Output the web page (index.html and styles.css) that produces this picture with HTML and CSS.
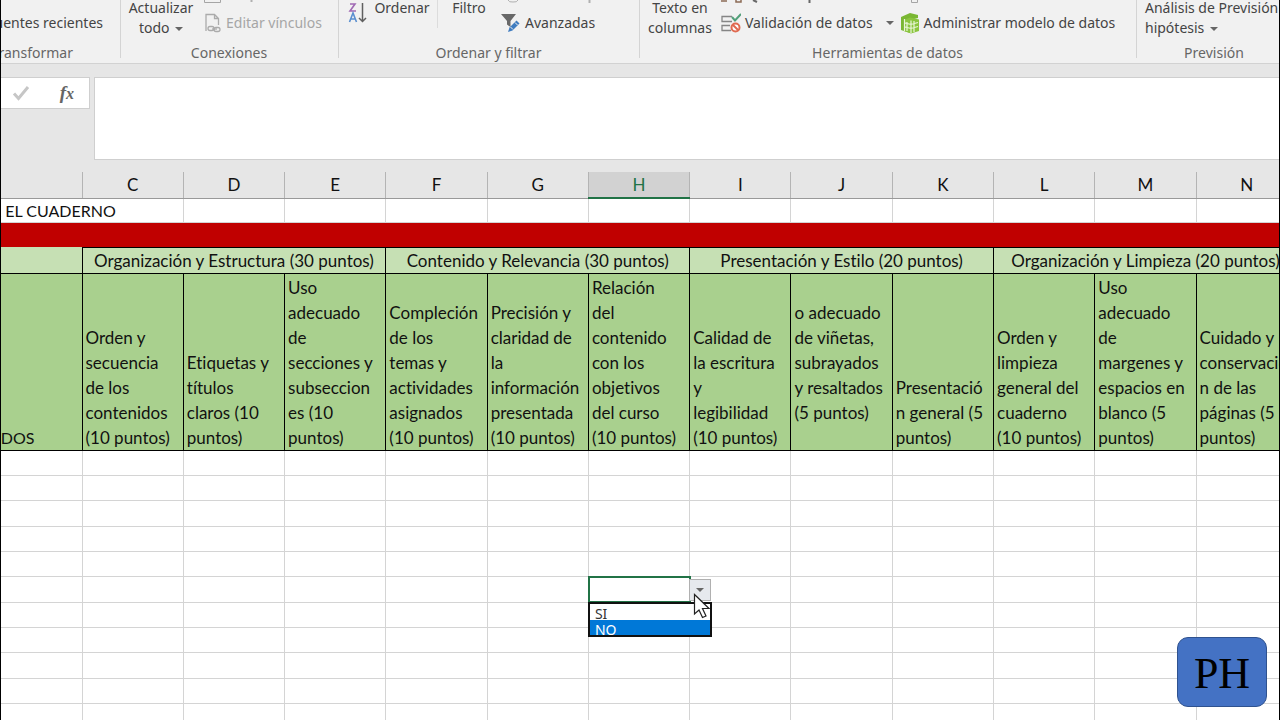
FILE: index.html
```html
<!DOCTYPE html>
<html lang="es">
<head>
<meta charset="utf-8">
<title>Rúbrica del cuaderno</title>
<link rel="stylesheet" href="styles.css">
</head>
<body>
<div class="app">
  <header class="ribbon">
    <section class="group group-transform">
      <div class="tools"><button class="tool">Fuentes recientes</button></div>
      <h2 class="group-name">Obtener y transformar</h2>
    </section>
    <section class="group group-connections">
      <div class="tools">
        <button class="tool-large">Actualizar<br>todo <span class="caret"></span></button>
        <div class="stack">
          <svg class="stub" width="60" height="3" viewBox="0 0 60 3"><path d="M.5 0v2.500h16V0" fill="none" stroke="#a5a5a5"/><path d="M47.500 0v2" stroke="#b0b0b0" stroke-width="2"/></svg>
          <button class="tool" disabled>
            <svg width="18" height="20" viewBox="0 0 18 20" fill="none" stroke="#ababab" stroke-width="1.300"><path d="M2 18V1.500h8.500l4 4V12M10.500 1.500v4h4"/><rect x="4" y="13.500" width="6" height="4" rx="2"/><rect x="10" y="14.500" width="6" height="4" rx="2"/><path d="M8 16h5"/></svg>
            Editar vínculos</button>
        </div>
      </div>
      <h2 class="group-name">Conexiones</h2>
    </section>
    <section class="group group-sort">
      <div class="tools">
        <button class="sort-icon" aria-label="Ordenar de Z a A">
          <svg width="19" height="24" viewBox="0 0 19 24" fill="none"><path d="M2 4h5L2 11h6" stroke="#a06ab4" stroke-width="1.600"/><path d="m1.500 22 3.500-9 3.500 9M3 19h4" stroke="#5a8fd0" stroke-width="1.600"/><path d="M14.500 3v18M11 18l3.500 3.500L18 18" stroke="#606060" stroke-width="1.500"/></svg>
        </button>
        <button class="tool-large tool-sort">Ordenar<br>&nbsp;</button>
        <span class="divider"></span>
        <button class="tool-large tool-filter">Filtro<br>&nbsp;</button>
        <div class="stack">
          <svg class="stub" width="94" height="3" viewBox="0 0 94 3"><path d="M7 0q1 2.500 5 2 4 .5 5-2" fill="none" stroke="#b0b0b0"/><path d="M88.500 0v3" stroke="#b0b0b0" stroke-width="2"/></svg>
          <button class="tool">
            <svg width="20" height="20" viewBox="0 0 20 20"><path d="M0 1h15L9.500 8v6L6 11.500V8z" fill="#686868"/><path d="m7 19 1.500-4.500 7-7 3 3-7 7z" fill="#3f7cc0"/><path d="m9.500 14 2.500 2.500M14 9.500l2.500 2.500" stroke="#f1f1f1"/></svg>
            Avanzadas</button>
        </div>
      </div>
      <h2 class="group-name">Ordenar y filtrar</h2>
    </section>
    <section class="group group-data">
      <div class="tools">
        <button class="tool-large">Texto en<br>columnas</button>
        <div class="stack">
          <svg class="stub" width="100" height="3" viewBox="0 0 100 3"><path d="M0 1h6M15 0v2h5V0" stroke="#8c6b55" stroke-width="1.500" fill="none"/><path d="M32 0l4 2M88.500 0v3" stroke="#686868" stroke-width="2"/></svg>
          <button class="tool">
            <svg width="20" height="20" viewBox="0 0 20 20" fill="none"><path d="M11 3.500H1v5h10M9 12.500H1v5h9" stroke="#858585" stroke-width="1.300"/><path d="m11 4 3 3.500L20 1" stroke="#52a07a" stroke-width="2"/><circle cx="14.500" cy="14.500" r="4" fill="#fff" stroke="#e06a50" stroke-width="2"/><path d="m12 12 5 5" stroke="#e06a50" stroke-width="2"/></svg>
            Validación de datos <span class="caret caret-wide"></span></button>
        </div>
        <div class="stack stack-model">
          <svg class="stub" width="40" height="3" viewBox="0 0 40 3"><path d="M11.500 0v2.500h6V0" fill="none" stroke="#a5a5a5"/></svg>
          <button class="tool">
            <svg width="20" height="21" viewBox="0 0 20 21"><path d="M1 4 10 0l8 2v3l-8 2v13L1 17z" fill="#7ab733"/><path d="m4 7 6-2.500 9 2V18l-8 2.500-7-2.500z" fill="#8bc53f"/><path d="M4.500 6v12M11 7.500V20M7 9v9M14 8v11M5 10l6 1.500 7-2M5 14l6 1.500 7-2" stroke="#e8f5d6" stroke-width="1.200" fill="none"/></svg>
            Administrar modelo de datos</button>
        </div>
      </div>
      <h2 class="group-name">Herramientas de datos</h2>
    </section>
    <section class="group group-forecast">
      <div class="tools">
        <button class="tool-large tool-left">Análisis de<br>hipótesis <span class="caret"></span></button>
        <button class="tool-large tool-left">Previsión<br>&nbsp;</button>
      </div>
      <h2 class="group-name">Previsión</h2>
    </section>
  </header>

  <div class="formula-bar">
    <div class="formula-tools">
      <button disabled aria-label="Introducir"><svg width="18" height="16" viewBox="0 0 18 16"><path d="m2 8.500 4.500 5L16 2" fill="none" stroke="#c6c6c6" stroke-width="3"/></svg></button>
      <button class="fx" aria-label="Insertar función">f<small>x</small></button>
    </div>
    <textarea class="formula" aria-label="Barra de fórmulas"></textarea>
  </div>

  <main class="sheet">
    <table class="grid">
      <colgroup><col class="col-first"><col span="12"></colgroup>
      <thead>
        <tr class="letters"><th></th><th>C</th><th>D</th><th>E</th><th>F</th><th>G</th><th class="active">H</th><th>I</th><th>J</th><th>K</th><th>L</th><th>M</th><th>N</th></tr>
      </thead>
      <tbody class="rubric">
        <tr class="title"><td colspan="2"><span class="from-right">RÚBRICA PARA EVALUAR EL CUADERNO</span></td><td></td><td></td><td></td><td></td><td></td><td></td><td></td><td></td><td></td><td></td><td></td></tr>
        <tr class="band"><td colspan="13"></td></tr>
        <tr class="sections"><td></td><th colspan="3">Organización y Estructura (30 puntos)</th><th colspan="3">Contenido y Relevancia (30 puntos)</th><th colspan="3">Presentación y Estilo (20 puntos)</th><th colspan="3">Organización y Limpieza (20 puntos)</th></tr>
        <tr class="criteria">
          <td><span class="from-right names">APELLIDOS</span></td>
          <td>Orden y<br>secuencia<br>de los<br>contenidos<br>(10 puntos)</td>
          <td>Etiquetas y<br>títulos<br>claros (10<br>puntos)</td>
          <td>Uso<br>adecuado<br>de<br>secciones y<br>subseccion<br>es (10<br>puntos)</td>
          <td>Compleción<br>de los<br>temas y<br>actividades<br>asignados<br>(10 puntos)</td>
          <td>Precisión y<br>claridad de<br>la<br>información<br>presentada<br>(10 puntos)</td>
          <td>Relación<br>del<br>contenido<br>con los<br>objetivos<br>del curso<br>(10 puntos)</td>
          <td>Calidad de<br>la escritura<br>y<br>legibilidad<br>(10 puntos)</td>
          <td>o adecuado<br>de viñetas,<br>subrayados<br>y resaltados<br>(5 puntos)<br>&nbsp;</td>
          <td>Presentació<br>n general (5<br>puntos)</td>
          <td>Orden y<br>limpieza<br>general del<br>cuaderno<br>(10 puntos)</td>
          <td>Uso<br>adecuado<br>de<br>margenes y<br>espacios en<br>blanco (5<br>puntos)</td>
          <td>Cuidado y<br>conservació<br>n de las<br>páginas (5<br>puntos)</td>
        </tr>
      </tbody>
      <tbody class="blank">
        <tr><td></td><td></td><td></td><td></td><td></td><td></td><td></td><td></td><td></td><td></td><td></td><td></td><td></td></tr>
        <tr><td></td><td></td><td></td><td></td><td></td><td></td><td></td><td></td><td></td><td></td><td></td><td></td><td></td></tr>
        <tr><td></td><td></td><td></td><td></td><td></td><td></td><td></td><td></td><td></td><td></td><td></td><td></td><td></td></tr>
        <tr><td></td><td></td><td></td><td></td><td></td><td></td><td></td><td></td><td></td><td></td><td></td><td></td><td></td></tr>
        <tr><td></td><td></td><td></td><td></td><td></td><td></td><td></td><td></td><td></td><td></td><td></td><td></td><td></td></tr>
        <tr><td></td><td></td><td></td><td></td><td></td><td></td>
          <td class="selected">
            <span class="outline"></span>
            <button class="open-list" aria-label="Abrir lista"><span class="caret"></span></button>
            <select class="choices" size="2" aria-label="Valor de la celda"><option>SI</option><option selected>NO</option></select>
            <svg class="pointer" width="18" height="26" viewBox="0 0 18 26"><path d="M1.500 1.500v19.500l4.500-4 3.500 7.500 3.500-1.500-3.500-7.500H16z" fill="#fff" stroke="#222" stroke-width="1.200"/></svg>
          </td>
          <td></td><td></td><td></td><td></td><td></td><td></td></tr>
        <tr><td></td><td></td><td></td><td></td><td></td><td></td><td></td><td></td><td></td><td></td><td></td><td></td><td></td></tr>
        <tr><td></td><td></td><td></td><td></td><td></td><td></td><td></td><td></td><td></td><td></td><td></td><td></td><td></td></tr>
        <tr><td></td><td></td><td></td><td></td><td></td><td></td><td></td><td></td><td></td><td></td><td></td><td></td><td></td></tr>
        <tr><td></td><td></td><td></td><td></td><td></td><td></td><td></td><td></td><td></td><td></td><td></td><td></td><td></td></tr>
        <tr><td></td><td></td><td></td><td></td><td></td><td></td><td></td><td></td><td></td><td></td><td></td><td></td><td></td></tr>
      </tbody>
    </table>
  </main>
  <div class="badge">PH</div>
</div>
</body>
</html>
```
FILE: styles.css
```css
* { box-sizing: border-box; }
body { margin: 0; background: #fff; }
button { padding: 0; border: 0; background: none; font: inherit; color: inherit; text-align: center; }
svg { display: block; flex: none; }

.app {
  position: relative;
  display: flex;
  flex-direction: column;
  height: 100vh;
  overflow: hidden;
  border: solid #000;
  border-width: 0 1px;
  background: #e6e6e6;
  font-family: "Noto Sans", "Open Sans", sans-serif;
  font-size: 14px;
  color: #444;
}

/* Ribbon */
.ribbon { display: flex; flex: none; overflow: hidden; background: #f1f1f1; border-bottom: 1px solid #d2d2d2; }
.group { position: relative; flex: none; padding-bottom: 2px; }
.group + .group::before { content: ""; position: absolute; left: 0; top: 0; bottom: 5px; width: 1px; background: #d4d4d4; }
.group-transform { width: 119px; }
.group-connections { width: 218px; }
.group-sort { width: 301px; }
.group-data { width: 497px; }
.group-forecast { width: 156px; }
.tools { display: flex; align-items: flex-end; height: 38px; overflow: hidden; white-space: nowrap; }
.group-transform .tools { justify-content: flex-end; padding-right: 17px; }
.group-connections .tools { padding-left: 6px; }
.group-sort .tools { padding-left: 10px; }
.group-data .tools { padding-left: 8px; }
.group-forecast .tools { padding-left: 9px; }
.group-name { display: flex; justify-content: center; height: 23px; margin: 0; font-size: 14px; font-weight: 400; line-height: 30px; color: #666; white-space: nowrap; }
.group-transform .group-name { justify-content: flex-end; padding-right: 47px; }
.tool { display: flex; align-items: center; gap: 4px; height: 28px; padding-bottom: 2px; line-height: 20px; }
.tool:disabled { color: #a6a6a6; }
.tool-large { width: 70px; line-height: 20px; }
.tool-sort { width: 70px; }
.tool-filter { width: 62px; }
.tool-left { width: 79px; text-align: left; }
.group-data .tool-large { width: 66px; }
.stack { display: flex; flex-direction: column; justify-content: space-between; height: 38px; margin-left: 8px; }
.group-sort .stack { margin-left: 1px; }
.group-data .stack-model { margin-left: 6px; }
.sort-icon { align-self: flex-start; }
.divider { align-self: flex-start; width: 1px; height: 28px; background: #dcdcdc; }
.caret { display: inline-block; margin-left: 2px; vertical-align: middle; border: solid transparent; border-width: 4px 4px 0; border-top-color: #666; }
.caret-wide { margin-left: 9px; }

/* Formula bar */
.formula-bar { display: flex; flex: none; gap: 4px; height: 96px; padding-top: 13px; }
.formula-tools { display: flex; align-items: center; justify-content: space-between; width: 89px; height: 32px; padding: 0 15px 0 11px; border: 1px solid #cfcfcf; border-left: 0; background: #fff; }
.fx { font: italic bold 19px/24px "Liberation Serif", serif; color: #666; }
.fx small { font-size: 16px; }
.formula { flex: 1; display: block; height: 83px; margin: 0; padding: 4px; border: 1px solid #cfcfcf; border-right: 0; background: #fff; resize: none; outline: 0; }

/* Sheet */
.sheet { flex: 1; min-height: 0; overflow: hidden; margin-top: 12px; background: #fff; }
.grid { width: 1297px; table-layout: fixed; border-collapse: collapse; font-family: Lato, "Open Sans", sans-serif; font-size: 17px; font-variant-ligatures: none; line-height: 25px; color: #111; }
.grid .col-first { width: 81px; }
.grid td, .grid th { height: 25px; padding: 0; border: 1px solid #d4d4d4; font-weight: 400; white-space: nowrap; }
.grid td:first-child, .grid th:first-child { border-left: 0; }
.grid .letters th { background: #e6e6e6; border-color: #b4b4b4; border-top: 0; border-bottom-color: #999; }
.grid .letters .active { background: #d2d2d2; color: #217346; border-bottom: 2px solid #217346; }
.from-right { display: flex; justify-content: flex-end; padding-right: 67px; font-size: 16px; }
.names { padding-right: 47px; }
.grid .title td { height: 24px; line-height: 23px; }
.grid .band td { background: #c00000; border: 0; }
.grid .sections td, .grid .sections th { background: #c6e0b4; border-color: #000; }
.grid .sections td { border-top: 0; }
.grid .criteria td { height: 177px; padding-left: 3px; vertical-align: bottom; background: #a9d08e; border-color: #000; overflow: hidden; }
.blank tr:nth-child(3n) td { height: 26px; }

/* Cell editor */
.selected { position: relative; }
.outline { position: absolute; inset: -1px -2px -1px -1px; border: 2px solid #217346; }
.open-list { position: absolute; left: 100%; top: 2px; display: flex; align-items: center; justify-content: center; width: 22px; height: 22px; border: 1px solid #b0b0b0; background: #e6e9ee; }
.open-list .caret { margin: 0; }
.choices { position: absolute; left: -1px; top: 100%; width: 124px; height: 35px; padding: 0; border: 2px solid #111; border-radius: 0; background: #fff; overflow: hidden; outline: 0; font: 14px/16px "Noto Sans", "Open Sans", sans-serif; color: #333; }
.choices option { height: 16px; min-height: 16px; padding: 0 5px; line-height: 14px; }
.choices option:checked { background: #0078d7 linear-gradient(#0078d7, #0078d7); -webkit-text-fill-color: #fff; }
.pointer { position: absolute; left: 104px; top: 16px; }

.badge { position: absolute; right: 12px; bottom: 13px; display: flex; align-items: center; justify-content: center; width: 90px; height: 70px; padding-top: 4px; border: 1px solid #2f528f; border-radius: 11px; background: #4472c4; font: 44px/44px "Liberation Serif", serif; color: #000; }
```
